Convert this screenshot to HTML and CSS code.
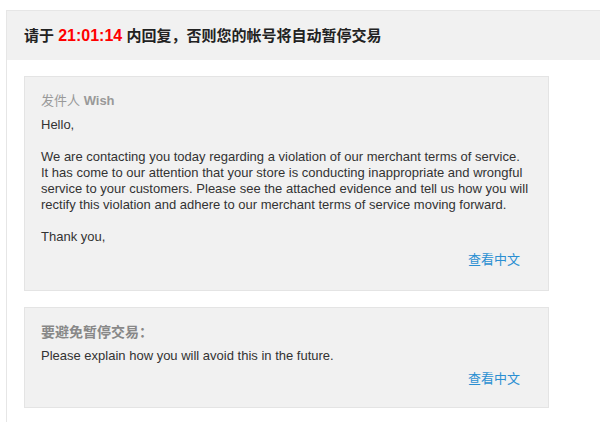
FILE: index.html
```html
<!DOCTYPE html>
<html lang="zh">
<head>
<meta charset="utf-8">
<link rel="stylesheet" href="styles.css">
</head>
<body>
<div class="panel">
  <div class="panel-head">请于 <span class="time">21:01:14</span> 内回复，否则您的帐号将自动暂停交易</div>
  <div class="panel-body">
    <div class="card card-first">
      <div class="sender">发件人 <b>Wish</b></div>
      <div class="msg">Hello,<br><br>We are contacting you today regarding a violation of our merchant terms of service.<br>It has come to our attention that your store is conducting inappropriate and wrongful<br>service to your customers. Please see the attached evidence and tell us how you will<br>rectify this violation and adhere to our merchant terms of service moving forward.<br><br>Thank you,</div>
      <div class="link-row"><a class="link">查看中文</a></div>
    </div>
    <div class="card card-second">
      <div class="title">要避免暂停交易：</div>
      <div class="msg">Please explain how you will avoid this in the future.</div>
      <div class="link-row"><a class="link">查看中文</a></div>
    </div>
  </div>
</div>
</body>
</html>
```

FILE: styles.css
```css
html, body {
  margin: 0;
  padding: 0;
  background: #fff;
  overflow: hidden;
}
body {
  width: 600px;
  height: 422px;
  font-family: "Liberation Sans", Arial, "Noto Sans CJK SC", sans-serif;
  color: #333;
}
.panel {
  margin: 10px 0 0 6px;
  width: 594px;
  border-top: 1px solid #e6e6e6;
  border-left: 1px solid #e6e6e6;
  height: 420px;
  box-sizing: border-box;
}
.panel-head {
  background: #f1f1f1;
  height: 49px;
  line-height: 49px;
  padding-left: 17px;
  font-size: 15px;
  font-weight: bold;
  color: #222;
  font-family: "Liberation Sans", "Noto Sans CJK SC", sans-serif;
}
.time {
  color: #f00;
  font-size: 16px;
}
.panel-body {
  padding: 16px 0 0 17px;
}
.card {
  width: 507px;
  background: #f1f1f1;
  border: 1px solid #e4e4e4;
  padding: 16px 0 23px 16px;
  margin-bottom: 16px;
}
.card-second {
  padding-bottom: 21px;
}
.sender {
  font-size: 13px;
  line-height: 16px;
  color: #999;
  margin-bottom: 8px;
}
.sender b {
  font-weight: bold;
}
.title {
  font-size: 14px;
  line-height: 16px;
  color: #888;
  font-weight: bold;
  margin-bottom: 8px;
}
.msg {
  font-size: 13px;
  line-height: 16px;
  color: #333;
}
.link-row {
  display: flex;
  justify-content: flex-end;
  margin-top: 6px;
  padding-right: 28px;
}
.link {
  font-size: 13px;
  line-height: 16px;
  color: #2a8fd2;
  font-family: "Noto Sans CJK SC", sans-serif;
  cursor: pointer;
}
```
